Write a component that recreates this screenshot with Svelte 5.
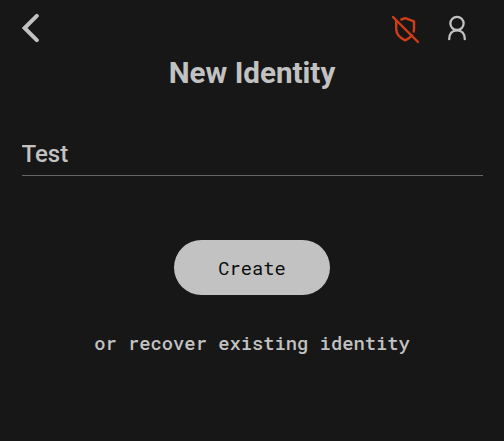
<script>
  let name = $state('Test');
</script>

<main>
  <header>
    <button class="icon" aria-label="Back">
      <svg width="24" height="34" viewBox="0 0 24 34" fill="none" stroke="#c2c2c2" stroke-width="4" stroke-linecap="round" stroke-linejoin="miter">
        <path d="M14.8 5.8 2.6 18 14.8 30.2" />
      </svg>
    </button>
    <div class="actions">
      <button class="icon" aria-label="Shield disabled">
        <svg width="30" height="32" viewBox="0 0 30 32" fill="none" stroke="#d13d18" stroke-width="2.4" stroke-linecap="round" stroke-linejoin="round">
          <path d="M3 5 28 30" />
          <path d="M6.2 9.2V17C6.2 22 8.6 25.2 15.2 28.4C18.2 27 20.5 25.3 21.9 23.2" />
          <path d="M11.4 7.5 15.2 6.1 24 9.3V17.2Q24 18.4 23.7 19.6" />
        </svg>
      </button>
      <button class="icon" aria-label="Profile">
        <svg width="24" height="32" viewBox="0 0 24 32" fill="none" stroke="#c2c2c2" stroke-width="2.3" stroke-linecap="round">
          <circle cx="12" cy="11.4" r="6.6" />
          <path d="M4.2 27.2C4.2 21.4 7.4 18.3 12 18.3S19.8 21.4 19.8 27.2" />
        </svg>
      </button>
    </div>
  </header>
  <h1>New Identity</h1>
  <input bind:value={name} aria-label="Identity name" />
  <button class="create">Create</button>
  <button class="recover">or recover existing identity</button>
</main>

<style>
  :global(body) {
    background: #171717;
  }
  main {
    box-sizing: border-box;
    height: 441px;
    padding: 12px 22px 0;
    display: flex;
    flex-direction: column;
    align-items: center;
    background: #171717;
    color: #c2c2c2;
    font-family: Roboto, sans-serif;
  }
  button {
    border: 0;
    padding: 0;
    margin: 0;
    background: none;
    color: inherit;
  }
  header {
    align-self: stretch;
    height: 42px;
    display: flex;
    justify-content: space-between;
    align-items: flex-start;
  }
  .icon {
    display: flex;
  }
  header > .icon {
    margin-top: -2px;
  }
  .actions {
    display: flex;
    gap: 25px;
    margin-right: 13px;
  }
  h1 {
    margin: 0;
    font-size: 29.6px;
    line-height: 38px;
    font-weight: 700;
    white-space: nowrap;
  }
  input {
    box-sizing: border-box;
    width: 461px;
    height: 40px;
    margin: 44px 0 0;
    padding: 0 0 4px;
    border: 0;
    border-bottom: 1px solid #666;
    border-radius: 0;
    outline: none;
    background: transparent;
    color: #c2c2c2;
    font: 500 24px/32px Roboto, sans-serif;
  }
  .create {
    width: 156px;
    height: 55px;
    margin-top: 64px;
    border-radius: 28px;
    background: #c2c2c2;
    color: #0c0c0c;
    font: 400 18.8px/24px 'Roboto Mono', 'DejaVu Sans Mono', monospace;
  }
  .recover {
    margin-top: 36px;
    font: 500 18.8px/24px 'Roboto Mono', 'DejaVu Sans Mono', monospace;
    white-space: nowrap;
  }
</style>
